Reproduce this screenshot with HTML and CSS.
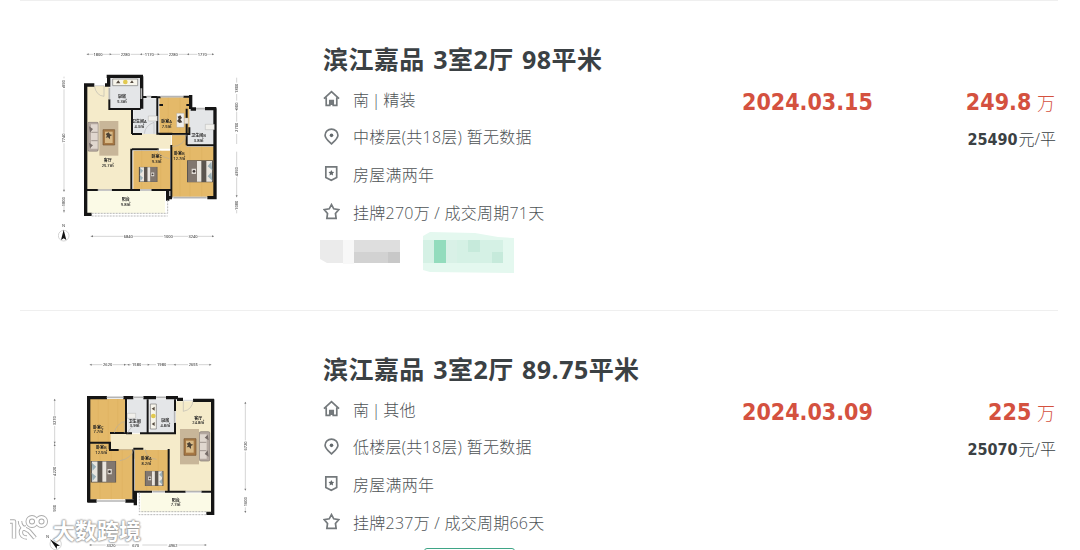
FILE: index.html
```html
<!DOCTYPE html>
<html lang="zh-CN">
<head>
    <meta charset="UTF-8">
    <meta name="viewport" content="width=device-width, initial-scale=1.0">
    <title>滨江嘉品 成交记录</title>
    <link rel="stylesheet" href="styles.css">
</head>
<body>
    <!-- shared icons and furniture -->
    <svg class="defs" width="0" height="0">
        <symbol id="icon-home" viewBox="0 0 18 18">
            <path d="M1 9.2 9 1.8l8 7.4M3.4 8v8.2h3.8v-5h3.6v5h3.8V8M9 11v5"/>
        </symbol>
        <symbol id="icon-pin" viewBox="0 0 18 18">
            <path d="M9 16.8C5.500 13.500 2.200 11 2.200 7.600a6.800 6.400 0 0 1 13.600 0C15.800 11 12.500 13.500 9 16.800z"/>
            <circle class="solid" cx="9" cy="7.800" r="1.900"/>
        </symbol>
        <symbol id="icon-badge" viewBox="0 0 18 18">
            <path d="M3 2h11.500v11.300l-5.750 2.900L3 13.300z"/>
            <path class="solid" d="m8.800 5.200.9 1.900 2.100.3-1.500 1.500.35 2.100-1.850-1-1.850 1 .35-2.100-1.500-1.500 2.100-.3z"/>
        </symbol>
        <symbol id="icon-star" viewBox="0 0 18 18">
            <path d="m9 1.700 2.400 4.500 5.200.9-3.400 4 .7 5.100H4.100l.7-5.100-3.400-4 5.200-.9z"/>
        </symbol>
        <symbol id="bed" viewBox="0 0 80 66">
            <path fill="#5b554f" d="M0 0h80v66H0z"/>
            <path fill="#e9e5de" d="M5 2h17v62H5zM37 2h13v62H37z"/>
            <path fill="#81776f" d="M50 1h27v64H50z"/>
            <path fill="#9ab0b8" d="m4 5 14 13L7 30zM4 36l14 12L7 62z"/>
            <path fill="#ded9d3" d="M53 25h13v16H53z"/>
            <circle cx="59" cy="33" r="4" fill="#423b38"/>
        </symbol>
        <symbol id="sofa" viewBox="0 0 34 90">
            <rect x="1" y="1" width="32" height="88" rx="5" fill="#b4a8a0" stroke="#81766f" stroke-width="2"/>
            <path fill="#e0d7cf" d="M11 8h20v73H11z"/>
            <path d="M12 32h19M12 57h19" stroke="#81766f" stroke-width="2"/>
            <path fill="#766c68" d="m5 14 12 8-9 11zM5 63l12 8-9 9z"/>
        </symbol>
    </svg>

    <ul class="deal-list">
        <li class="deal">
            <div class="thumb">
                <svg class="plan" width="200" height="210" viewBox="0 0 600 630">
                    <!-- floors -->
                    <path fill="#f5ebca" d="M110 138h68v70h68v74h118v44H246v124H110z"/>
                    <path fill="#e4e6e8" d="M180 114h92v92h-92zM250 175h72v107h-72zM412 206h82v108h-82z"/>
                    <path fill="#e4b969" d="M328 172h90v108h-90zM250 332h110v116H250zM366 320h126v150H366zM366 282h44v42h-44z"/>
                    <path class="boards" d="M355 172v108M390 172v108M275 332v116M303 332v116M332 332v116M390 320v150M420 320v150M455 320v150"/>
                    <path fill="#fbfae6" d="M112 453h233v67H112z"/>
                    <path fill="#c8b699" d="M148 243h57v104h-57z"/>
                    <!-- walls -->
                    <path class="wall" d="M107 131v396M102 135h31M165 135h12M176 140v-30M170 109h109M275 109v97M422 165v42M422 207h16M465 206h34M495 205v273M500 473h-28M366 473h-14M353 450v32M125 523h-23"/>
                    <path class="wall thin" d="M178 178v29h94M246 207v75M244 326v126M246 282h30M322 172v109h45M322 172h10M275 171h15M303 171h19M400 170h22M328 282h90v-20M328 195h11M409 195h10M364 315v160M246 328h80M410 316h84M410 206v110M110 450h35M185 450h85M304 450h60"/>
                    <path class="glass" d="M290 170h14M332 170h68M438 206h27M370 473h100M143 450h43M270 450h34M178 143v35M274 145v32"/>
                    <path class="rail" d="M125 520h228V480M125 528h228"/>
                    <path class="door" d="M133 137h29v32q-24-2-29-32M283 281q2-24 29-34v34M323 328q4 22 35 28M366 285h43q-5 32-43 35"/>
                    <!-- furniture -->
                    <use href="#sofa" x="112" y="245" width="34" height="90"/>
                    <path fill="#a67844" stroke="#765635" stroke-width="2" d="M159 269h35v46h-35z"/>
                    <path fill="#d8b986" d="M165 275h23v34h-23z"/>
                    <path fill="#4b4236" d="m167 282 9-5 4 6 7 2-7 4v9l-6-6-7 1 4-6z"/>
                    <path fill="#f7f5eb" stroke="#777" stroke-width="2" d="M188 117h75v20h-75z"/>
                    <circle cx="226" cy="126" r="7" fill="#e1c94f"/>
                    <path fill="#554b40" d="m198 130 7-9 6 9zM240 129l6-8 5 8z"/>
                    <path fill="#f1f0ec" stroke="#999" d="M295 228h27v15h-27zM466 253h27v16h-27zM380 220h22v42h-22z"/>
                    <path fill="#453e39" d="m383 230 8-4 5 8-5 4 6 9-9 2-7-6 5-6z"/>
                    <path fill="#eee4d4" stroke="#aaa" d="M403 234h12v17h-12z"/>
                    <use href="#bed" x="411" y="359" width="80" height="70" preserveAspectRatio="none" transform="rotate(180 451 394)"/>
                    <use href="#bed" x="256" y="380" width="77" height="46" preserveAspectRatio="none"/>
                    <!-- rooms -->
                    <g class="room">
                        <text x="216" y="175">厨房</text><text x="216" y="189">5.3㎡</text>
                        <text x="268" y="249">卫生间A</text><text x="268" y="263">4.3㎡</text>
                        <text x="350" y="249">卧室A</text><text x="350" y="263">7.5㎡</text>
                        <text x="446" y="292">卫生间B</text><text x="446" y="306">3.8㎡</text>
                        <text x="173" y="367">客厅</text><text x="173" y="381">25.7㎡</text>
                        <text x="320" y="355">卧室C</text><text x="320" y="369">9.3㎡</text>
                        <text x="388" y="346">卧室B</text><text x="388" y="360">12.7㎡</text>
                        <text x="227" y="483">阳台</text><text x="227" y="497">9.8㎡</text>
                    </g>
                    <!-- dimensions -->
                    <path class="dim" d="M110 43h20M158 43h52M242 43h42M312 43h42M386 43h56M471 43h21M42 110v5M42 148v130M42 310v145M42 494v25M560 113v15M560 162v20M560 215v30M560 282v30M560 335v45M560 412v60M560 510v10M122 589h98M250 589h90M370 589h45M443 589h49"/>
                    <path class="tick" d="m116 40-6 3 6 3zM179 40l6 3-6 3zM276 40l-6 3 6 3zM323 40l6 3-6 3zM417 40l-6 3 6 3zM486 40l6 3-6 3zM39 144l3-6 3 6zM39 449l3 6 3-6zM39 511l3 6 3-6zM557 207l3 6 3-6zM557 466l3 6 3-6zM129 586l-7 3 7 3zM486 586l6 3-6 3z"/>
                    <g class="size">
                        <text x="144" y="47">1800</text><text x="226" y="47">2280</text><text x="298" y="47">1170</text><text x="370" y="47">2280</text><text x="457" y="47">1770</text>
                        <text x="235" y="593">6840</text><text x="355" y="593">1000</text><text x="429" y="593">3240</text>
                        <text transform="translate(46 131) rotate(-90)">990</text><text transform="translate(46 294) rotate(-90)">7740</text><text transform="translate(46 485) rotate(-90)">1800</text>
                        <text transform="translate(564 145) rotate(-90)">1800</text><text transform="translate(564 198) rotate(-90)">900</text><text transform="translate(564 262) rotate(-90)">2700</text><text transform="translate(564 395) rotate(-90)">4350</text><text transform="translate(564 496) rotate(-90)">1080</text>
                        <text x="41" y="560">N</text>
                    </g>
                    <circle class="dim" cx="41" cy="587" r="16"/>
                    <path fill="#111" d="m41 569 8 31-8-5-8 5z"/>
                </svg>
            </div>
            <div class="info">
                <h2 class="title">滨江嘉品 3室2厅 98平米</h2>
                <p class="row facing"><svg class="icon"><use href="#icon-home"/></svg>南 | 精装</p>
                <p class="row"><svg class="icon"><use href="#icon-pin"/></svg>中楼层(共18层) 暂无数据</p>
                <p class="row"><svg class="icon"><use href="#icon-badge"/></svg>房屋满两年</p>
                <p class="row"><svg class="icon"><use href="#icon-star"/></svg>挂牌270万 / 成交周期71天</p>
                <svg class="mosaic" width="196" height="42" viewBox="0 0 196 42">
                    <path fill="#ebebeb" d="M0 8h23v23H7l-7-4z"/>
                    <path fill="#f8f8f8" d="M23 8h11v24H23z"/>
                    <path fill="#dedede" d="M34 8h46v12H34z"/>
                    <path fill="#d2d2d2" d="M34 20h46v11H34z"/>
                    <path fill="#c8c8c8" d="M68 20h12v11H68z"/>
                    <path fill="#e4f8ef" d="M103 4 110 0l45 1 23 4 16 1v35l-84-1-7-2z"/>
                    <path fill="#d5f1e5" d="M103 8h80v23h-80z"/>
                    <path fill="#d9f1e7" d="M126 8h11v23h-11z"/>
                    <path fill="#93dcbd" d="M114 8h12v23h-12z"/>
                    <path fill="#c6eadb" d="M148 8h12v12h-12zM172 20h11v11h-11z"/>
                </svg>
            </div>
            <div class="date">2024.03.15</div>
            <div class="price">
                <div class="total"><b>249.8</b> 万</div>
                <div class="unit"><b>25490</b>元/平</div>
            </div>
        </li>

        <li class="deal">
            <div class="thumb thumb-wide">
                <svg class="plan" width="220" height="200" viewBox="0 0 660 600">
                    <!-- floors -->
                    <path fill="#f5ebca" d="M408 154h110v270H390v-98H212v-75h196z"/>
                    <path fill="#e4b969" d="M149 147h106v103h-43v26h-63zM149 280h62v18h67v150H149zM285 300h102v122H285z"/>
                    <path fill="#e4e6e8" d="M262 148h60v101h-60zM328 148h76v100h-76z"/>
                    <path class="boards" d="M175 147v129M205 147v129M233 147v101M180 300v148M214 300v148M247 300v148M320 300v122M355 300v122"/>
                    <path fill="#fbfae6" d="M302 430h214v57H302z"/>
                    <path fill="#c8b699" d="M420 237h57v106h-57z"/>
                    <!-- walls -->
                    <path class="wall" d="M146 138v318M141 143h60M250 143h30M310 143h38M378 143h36M411 148h18M459 151h63M518 148v347M521 490h-22M142 453h28M256 453h27M286 423v43"/>
                    <path class="wall thin" d="M258 147v102h-48M323 148v101M300 250h108M405 148v35M405 218v31M146 278h64v22h26M209 276v22M280 298v150M280 296h30M386 297v128M258 250h18M280 425h56M375 425h62M484 425h36"/>
                    <path class="glass" d="M200 142h50M280 142h30M348 142h30M170 453h86M337 425h38M437 425h47M404 183v35"/>
                    <path class="rail" d="M499 485H298v-57M499 494H296"/>
                    <path class="door" d="M430 151h29q-2 28-29 33zM223 249q4-25 30-35v35M263 251q4-21 34-29M237 299h44q-8 27-41 33M315 297q5 29 35 31"/>
                    <!-- furniture -->
                    <use href="#sofa" x="477" y="239" width="34" height="100" preserveAspectRatio="none" transform="rotate(180 494 289)"/>
                    <path fill="#a67844" stroke="#765635" stroke-width="2" d="M432 266h36v50h-36z"/>
                    <path fill="#d8b986" d="M438 272h23v36h-23z"/>
                    <path fill="#4b4236" d="m440 281 9-5 4 6 7 2-7 4v9l-6-6-7 1 4-6z"/>
                    <path fill="#f7f5eb" stroke="#777" stroke-width="2" d="M331 162h18v75h-18z"/>
                    <circle cx="340" cy="198" r="7" fill="#e1c94f"/>
                    <path fill="#554b40" d="m335 176 9-6v12zM335 222l9-6v12z"/>
                    <path fill="#f1f0ec" stroke="#999" d="M262 190h25v15h-25z"/>
                    <use href="#bed" x="151" y="331" width="78" height="68" preserveAspectRatio="none"/>
                    <use href="#bed" x="301" y="362" width="83" height="46" preserveAspectRatio="none" transform="rotate(180 342.5 385)"/>
                    <!-- rooms -->
                    <g class="room">
                        <text x="175" y="237">卧室C</text><text x="175" y="250">7.7㎡</text>
                        <text x="284" y="218">卫生间</text><text x="284" y="231">3.9㎡</text>
                        <text x="376" y="216">厨房</text><text x="376" y="230">4.8㎡</text>
                        <text x="475" y="209">客厅</text><text x="475" y="223">24.8㎡</text>
                        <text x="184" y="297">卧室B</text><text x="184" y="311">12.5㎡</text>
                        <text x="319" y="330">卧室A</text><text x="319" y="345">8.2㎡</text>
                        <text x="407" y="455">阳台</text><text x="407" y="468">7.7㎡</text>
                    </g>
                    <!-- dimensions -->
                    <path class="dim" d="M149 44h38M219 44h55M306 44h42M382 44h62M476 44h38M44 147v50M44 228v120M44 380v70M616 156v115M616 305v115M616 472v15M148 585h49M228 585h40M307 585h75M415 585h84"/>
                    <path class="tick" d="m155 41-6 3 6 3zM252 41l6 3-6 3zM268 41l-6 3 6 3zM323 41l6 3-6 3zM407 41l-6 3 6 3zM508 41l6 3-6 3zM41 152l3-6 3 6zM41 275l3 6 3-6zM41 288l3-6 3 6zM41 444l3 6 3-6zM613 161l3-6 3 6zM613 416l3 6 3-6zM613 483l3 6 3-6zM154 582l-6 3 6 3zM494 582l6 3-6 3z"/>
                    <g class="size">
                        <text x="203" y="48">2620</text><text x="290" y="48">1580</text><text x="365" y="48">1980</text><text x="460" y="48">2655</text>
                        <text x="213" y="590">3320</text><text x="287" y="590">670</text><text x="399" y="590">4962</text>
                        <text transform="translate(48 212) rotate(-90)">3270</text><text transform="translate(48 364) rotate(-90)">4220</text><text transform="translate(48 475) rotate(-90)">900</text>
                        <text transform="translate(620 288) rotate(-90)">6720</text><text transform="translate(620 455) rotate(-90)">1600</text>
                        <text x="23" y="563">N</text>
                    </g>
                    <circle class="dim" cx="47" cy="582" r="17"/>
                    <path fill="#111" d="m30 568 30 19-9 1-1 9z"/>
                </svg>
            </div>
            <div class="info">
                <h2 class="title">滨江嘉品 3室2厅 89.75平米</h2>
                <p class="row facing"><svg class="icon"><use href="#icon-home"/></svg>南 | 其他</p>
                <p class="row"><svg class="icon"><use href="#icon-pin"/></svg>低楼层(共18层) 暂无数据</p>
                <p class="row"><svg class="icon"><use href="#icon-badge"/></svg>房屋满两年</p>
                <p class="row"><svg class="icon"><use href="#icon-star"/></svg>挂牌237万 / 成交周期66天</p>
                <div class="tag"></div>
            </div>
            <div class="date">2024.03.09</div>
            <div class="price">
                <div class="total"><b>225</b> 万</div>
                <div class="unit"><b>25070</b>元/平</div>
            </div>
        </li>
    </ul>

    <div class="watermark">
        <svg width="44" height="30" viewBox="0 0 44 30">
            <symbol id="logo" viewBox="0 0 44 30">
                <path d="M3 7.500h4v17M19 13.500c-7 0-7 10 1 10M13 7c0 7 6 8 9 10l6 7"/>
                <circle cx="25" cy="7.500" r="4.300"/>
                <circle cx="34.500" cy="7.500" r="4.300"/>
            </symbol>
            <use class="logo-edge" href="#logo"/>
            <use class="logo-fill" href="#logo"/>
        </svg>
        <span>大数跨境</span>
    </div>
</body>
</html>
```
FILE: styles.css
```css
* {
    box-sizing: border-box;
}

body {
    margin: 0;
    height: 550px;
    overflow: hidden;
    position: relative;
    background: #fff;
    color: #4e5356;
    font-family: "Open Sans", "Noto Sans CJK SC", sans-serif;
}

.defs {
    position: absolute;
}

.deal-list {
    list-style: none;
    margin: 0;
    padding: 0 22px 0 20px;
    height: 550px;
    overflow: hidden;
}

.deal {
    display: flex;
    height: 310px;
    border-top: 1px solid #efefef;
}

.thumb {
    width: 304px;
    flex: none;
    padding: 39px 0 0 30px;
}

.thumb-wide {
    padding-left: 20px;
}

.plan {
    display: block;
    filter: blur(0.4px);
}

.wall {
    fill: none;
    stroke: #151515;
    stroke-width: 10;
}

.wall.thin {
    stroke-width: 6;
}

.glass {
    fill: none;
    stroke: #b5b5b5;
    stroke-width: 5;
}

.rail {
    fill: none;
    stroke: #b8b8b8;
    stroke-width: 3;
    stroke-dasharray: 6 3;
}

.door,
.dim {
    fill: none;
    stroke: #aaa;
    stroke-width: 1.5;
}

.boards {
    stroke: #d9ab58;
    stroke-width: 1;
}

.tick {
    fill: #777;
}

.room text,
.size text {
    text-anchor: middle;
    font-size: 12px;
    font-weight: 600;
    fill: #222;
}

.size text {
    fill: #555;
}

.info {
    width: 418px;
    flex: none;
    padding-top: 39px;
}

.title {
    margin: 0;
    height: 40px;
    font-size: 25px;
    line-height: 38px;
    font-weight: bold;
    color: #3b4144;
    letter-spacing: 0.45px;
    word-spacing: 1.5px;
    text-indent: -1px;
    white-space: nowrap;
}

.row {
    display: flex;
    align-items: center;
    margin: 0;
    height: 37.6px;
    font-size: 16px;
    letter-spacing: 0.25px;
    white-space: nowrap;
    font-weight: 300;
}

.facing {
    word-spacing: -1.8px;
}

.icon {
    width: 17px;
    height: 17px;
    margin: 0 13px 0 -1px;
    fill: none;
    stroke: #74797c;
    stroke-width: 1.8;
}

.solid {
    fill: #62686b;
    stroke: none;
}

.mosaic {
    display: block;
    margin: 2px 0 0 -4px;
}

.tag {
    width: 91px;
    height: 28px;
    margin: 8px 0 0 100px;
    border: 1px solid #3fa586;
    border-radius: 3px;
}

.date {
    width: 160px;
    flex: none;
    padding-top: 86px;
    font-family: "DejaVu Sans Condensed", "DejaVu Sans", sans-serif;
    font-stretch: condensed;
    font-size: 23px;
    line-height: 30px;
    font-weight: bold;
    color: #d4513f;
}

.price {
    flex: 1;
    padding-top: 86px;
    text-align: right;
    white-space: nowrap;
}

.price b {
    font-family: "DejaVu Sans Condensed", "DejaVu Sans", sans-serif;
    font-stretch: condensed;
    font-weight: 700;
}

.total {
    height: 30px;
    font-size: 18px;
    line-height: 30px;
    font-weight: 300;
    color: #d4513f;
    padding-right: 3px;
}

.total b {
    font-size: 23px;
    margin-right: 1px;
}

.unit {
    height: 36px;
    padding-top: 7px;
    font-size: 16px;
    line-height: 30px;
    color: #3b4144;
    padding-right: 2px;
    font-weight: 300;
}

.unit b {
    margin-right: 1px;
}

/* sits over the bottom left corner of the list */
.watermark {
    position: absolute;
    left: 7px;
    bottom: 6px;
    display: flex;
    align-items: center;
    gap: 2px;
    height: 30px;
    line-height: 24px;
    font-family: "Noto Sans CJK SC", sans-serif;
    font-size: 22px;
    font-weight: 700;
    color: #fff;
    text-shadow: 0 0 2px #888, 0 0 2px #999, 0 0 2px #999;
}

.logo-edge,
.logo-fill {
    fill: none;
    stroke: #aaa;
    stroke-width: 4.4;
    stroke-linejoin: round;
}

.logo-fill {
    stroke: #fff;
    stroke-width: 2.6;
}
```
